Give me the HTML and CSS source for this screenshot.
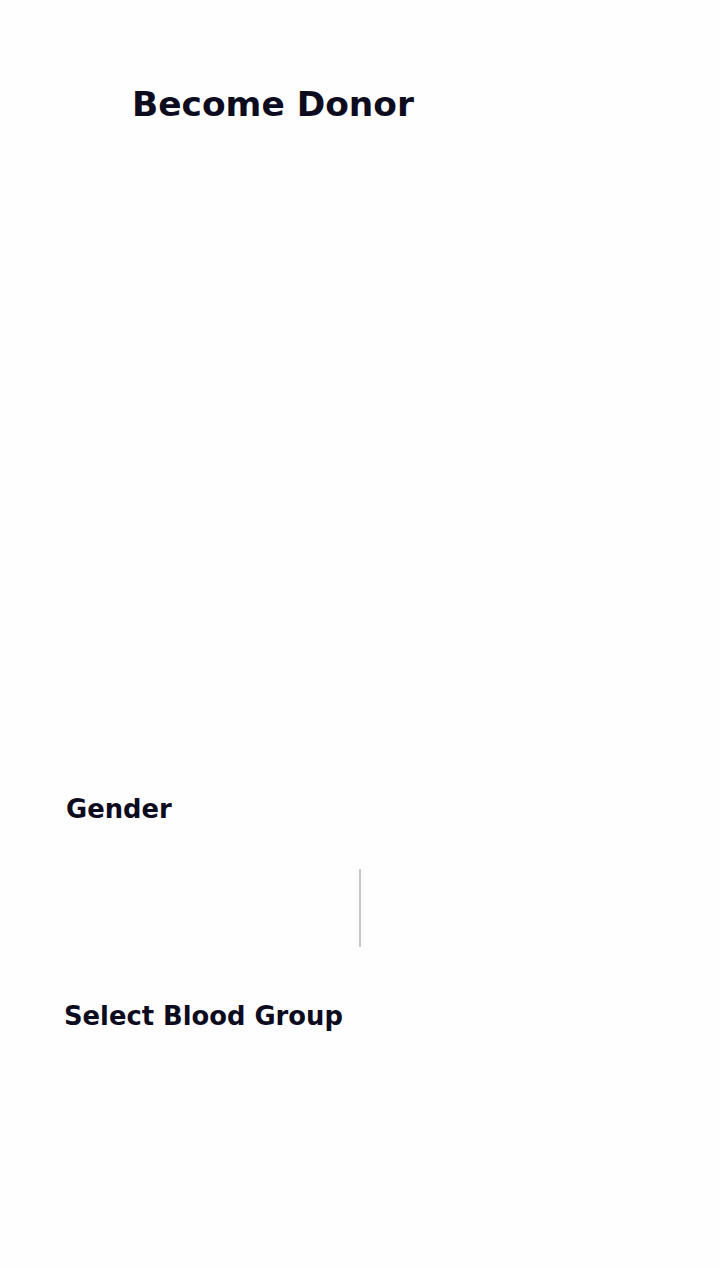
FILE: index.html
```html
<!DOCTYPE html>
<html lang="en">
<head>
<meta charset="utf-8">
<title>Become Donor</title>
<link rel="stylesheet" href="styles.css">
</head>
<body>
<div class="page">
  <header class="header">
    <div class="back-slot"></div>
    <h1 class="title">Become Donor</h1>
  </header>
  <form class="form">
    <div class="fields"></div>
    <section class="gender">
      <h2 class="label label-gender">Gender</h2>
      <div class="toggle">
        <div class="toggle-option"></div>
        <div class="toggle-divider"></div>
        <div class="toggle-option"></div>
      </div>
    </section>
    <section class="blood">
      <h2 class="label label-blood">Select Blood Group</h2>
      <div class="blood-grid"></div>
    </section>
  </form>
</div>
</body>
</html>
```

FILE: styles.css
```css
html, body {
  margin: 0;
  padding: 0;
  background: #fefefe;
}
body {
  font-family: "DejaVu Sans", "Liberation Sans", sans-serif;
  color: #0d0c1f;
}
.page {
  width: 720px;
  min-height: 1268px;
  display: flex;
  flex-direction: column;
}
.header {
  display: flex;
  align-items: center;
  padding-top: 84px;
  height: 40px;
}
.back-slot {
  width: 132px;
  flex: none;
}
.title {
  margin: 0;
  font-size: 34.4px;
  line-height: 40px;
  font-weight: 700;
  letter-spacing: 0;
}
.form {
  display: flex;
  flex-direction: column;
  padding: 0 64px;
}
.fields {
  height: 670px;
}
.label {
  margin: 0;
  font-weight: 700;
  font-size: 25.8px;
  line-height: 30px;
}
.label-gender {
  padding-left: 2px;
}
.toggle {
  margin-top: 45px;
  height: 78px;
  display: flex;
  align-items: stretch;
}
.toggle-option {
  flex: 1;
}
.toggle-divider {
  width: 2px;
  background: #c8c8c8;
}
.blood {
  margin-top: 54px;
}
.blood-grid {
  height: 200px;
}
```
